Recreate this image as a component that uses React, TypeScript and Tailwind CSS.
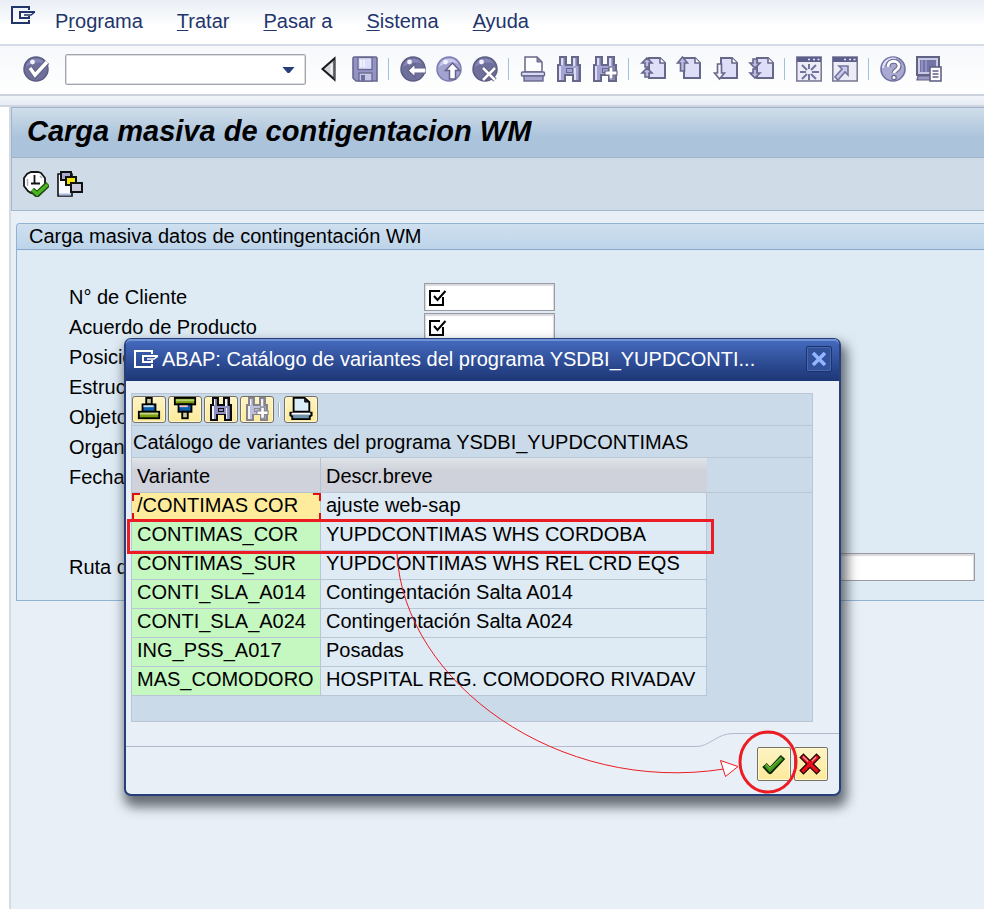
import type { ReactNode } from "react";

const FONT = "font-['Liberation_Sans',Arial,sans-serif]";

/* ---------- shared icon frame ---------- */

function Icon({ children, className = "h-[26px] w-[26px]" }: { children: ReactNode; className?: string }) {
  return (
    <svg viewBox="0 0 26 26" className={className} aria-hidden="true">
      {children}
    </svg>
  );
}

function SessionGlyph({ color }: { color: string }) {
  return (
    <svg viewBox="0 0 24 18" className="h-[18px] w-6 shrink-0" fill="none" stroke={color} strokeWidth="2" aria-hidden="true">
      <path d="M18 4V1H1v16h17v-3" />
      <path d="M24 6H9v6h9v-2" />
      <path d="M13 9h7l4-3" strokeWidth="1.4" />
    </svg>
  );
}

/* ---------- system toolbar icons ---------- */

const DARK = "#67678a";
const MID = "#8585b4";
const LIGHT = "#dedef8";

function Ball({ light = false }: { light?: boolean }) {
  return (
    <>
      <circle cx="13" cy="13" r="12" fill={light ? "#a3a3cf" : "#6f6f9c"} stroke={light ? "#7d7db2" : "#5d5d84"} strokeWidth="1.5" />
      <path d="M3 11a10 9 0 0 1 19-3C16 5 8 7 3 11z" fill={light ? "#c9c9ee" : "#8686b8"} />
      <circle cx="9.5" cy="6" r="2.4" fill="#f2f2ff" />
    </>
  );
}

const EnterIcon = () => (
  <Icon>
    <Ball />
    <path d="M7 12l5 7L24 6" fill="none" stroke="#66668a" strokeWidth="6" />
    <path d="M7 12l5 7L24 6" fill="none" stroke="#fff" strokeWidth="3.4" />
  </Icon>
);

const CollapseIcon = () => (
  <Icon>
    <path d="M18.500 2.500v21L6.500 13z" fill="#d4d4da" stroke="#16181c" strokeWidth="2" />
    <path d="M18.500 4v19" stroke="#55575c" strokeWidth="1.500" />
    <path d="M15.500 8v10" stroke="#f2f2f5" strokeWidth="2" />
  </Icon>
);

const SaveIcon = () => (
  <Icon>
    <path d="M2 1h22l1 1v23H4l-3-3V2z" fill="#9393c6" stroke="#686891" strokeWidth="1.6" />
    <rect x="6" y="1.5" width="14" height="12" fill="#dcdcfb" stroke={DARK} strokeWidth="1.3" />
    <path d="M9 4v7M12 4v7" stroke="#fff" strokeWidth="1.2" />
    <rect x="7" y="17" width="13" height="8" fill="#c6c6ea" stroke={DARK} strokeWidth="1.3" />
    <rect x="9" y="19" width="4" height="6" fill="#6f6f9c" />
  </Icon>
);

const BackIcon = () => (
  <Icon>
    <Ball />
    <path d="M8 14.500l7-6.500v4h11v5H15v4z" fill="#fff" stroke="#62628a" strokeWidth="1.2" />
  </Icon>
);

const ExitIcon = () => (
  <Icon>
    <Ball light />
    <path d="M16.500 7l7 7.500h-4V23h-6v-8.500h-4z" fill="#fff" stroke="#62628a" strokeWidth="1.5" />
  </Icon>
);

const CancelIcon = () => (
  <Icon>
    <Ball />
    <path d="M11 12l12 12M23 12L11 24" stroke="#55557a" strokeWidth="4.500" />
    <path d="M11 12l12 12M23 12L11 24" stroke="#fff" strokeWidth="2.600" />
  </Icon>
);

const PrintIcon = () => (
  <Icon>
    <path d="M5 16V1h12l5 5v10z" fill="#fdfdff" stroke={DARK} strokeWidth="1.5" />
    <path d="M17 1v5h5z" fill="#8585b4" stroke={DARK} />
    <rect x="1.500" y="16" width="23" height="4" rx="1" fill="#dadaf4" stroke={DARK} strokeWidth="1.4" />
    <rect x="4" y="20" width="19" height="5" fill="#a5a5d0" stroke={DARK} strokeWidth="1.4" />
  </Icon>
);

function Binoculars({ line, body, shine, shade }: { line: string; body: string; shine: string; shade: string }) {
  return (
    <g shapeRendering="crispEdges">
      <path d="M4 1h6v8h6V1h6v8h2v16h-7v-6H9v6H2V9h2z" fill={body} />
      <path d="M5 1h2v8H5v15H3V10h2zM17 1h2v9h-2zM18 12h2v12h-2z" fill={shine} />
      <path d="M20 1h2v8h2v15h-2V10h-2zM8 2h2v7H8z" fill={shade} />
      <path d="M4 1h6v8h6V1h6v8h2v16h-7v-6H9v6H2V9h2z" fill="none" stroke={line} strokeWidth="2" />
      <path d="M10 12h6v4h-6z" fill={body} stroke={line} strokeWidth="1" />
    </g>
  );
}

const Plus = ({ line = DARK }: { line?: string }) => (
  <path d="M17 11h4v4h4v4h-4v4h-4v-4h-4v-4h4z" fill="#fff" stroke={line} strokeWidth="1.200" />
);

const FindIcon = () => (
  <Icon>
    <Binoculars line={DARK} body="#a4a4d4" shine="#dcdcf6" shade={MID} />
  </Icon>
);

const FindNextIcon = () => (
  <Icon>
    <Binoculars line={DARK} body="#a4a4d4" shine="#dcdcf6" shade={MID} />
    <Plus />
  </Icon>
);

function Sheet({ x = 8 }: { x?: number }) {
  return (
    <g transform={`translate(${x} 0)`}>
      <path d="M1 2h11l5 5v15H1z" fill={LIGHT} stroke={DARK} strokeWidth="2" />
      <path d="M12 2v5h5" fill="#fff" stroke={DARK} strokeWidth="1.600" />
    </g>
  );
}

const UP = "M0 -5l5 5h-3v4h-4v-4h-3z";
const DOWN = "M0 5l5 -5h-3v-4h-4v4h-3z";

const FirstPageIcon = () => (
  <Icon>
    <Sheet />
    <g fill="#babae2" stroke={DARK} strokeWidth="1.600">
      <path transform="translate(7 7)" d={UP} />
      <path transform="translate(7 17)" d={UP} />
    </g>
  </Icon>
);

const PrevPageIcon = () => (
  <Icon>
    <Sheet x={7} />
    <path d="M6.500 1l5 6h-3v8h-4V7h-3z" fill="#babae2" stroke={DARK} strokeWidth="1.600" />
  </Icon>
);

const NextPageIcon = () => (
  <Icon>
    <Sheet x={8} />
    <path d="M7.500 23l5-6h-3V8h-4v9h-3z" fill="#f4f4ff" stroke={DARK} strokeWidth="1.600" />
  </Icon>
);

const LastPageIcon = () => (
  <Icon>
    <Sheet />
    <g fill="#babae2" stroke={DARK} strokeWidth="1.600">
      <path transform="translate(7 7)" d={DOWN} />
      <path transform="translate(7 17)" d={DOWN} />
    </g>
  </Icon>
);

function WindowFrame() {
  return (
    <>
      <rect x="0.800" y="1" width="24.400" height="24" fill="#ececf6" stroke="#747492" strokeWidth="1.500" />
      <rect x="1" y="1" width="24" height="5" fill="#5e5e8c" />
      <path d="M12 3.500h2M17 3.500h2M21.500 3.500h2" stroke="#e6e6ff" strokeWidth="1.500" />
    </>
  );
}

const NewSessionIcon = () => (
  <Icon>
    <WindowFrame />
    <path d="M13 8v5M13 18v6M4 16h6M16 16h7M6 9l5 5M20 9l-5 5M6 23l5-5M20 23l-5-5" stroke="#7474a0" strokeWidth="2" />
  </Icon>
);

const ShortcutIcon = () => (
  <Icon>
    <WindowFrame />
    <path d="M7 10h9v9l-3-3-7 8-3-3 7-8z" fill="#c9c9ec" stroke="#74749c" strokeWidth="1.600" />
  </Icon>
);

const HelpIcon = () => (
  <Icon>
    <circle cx="13" cy="13" r="12" fill="#a9a9d2" stroke="#7272a2" strokeWidth="1.600" />
    <path d="M3 12a10 10 0 0 1 13-9" fill="none" stroke="#e2e2fa" strokeWidth="2" />
    <path d="M8 11c0-8 11-7 11-1 0 4-5 4-5 7" fill="none" stroke="#67678e" strokeWidth="5" />
    <path d="M8 11c0-8 11-7 11-1 0 4-5 4-5 7" fill="none" stroke="#fff" strokeWidth="2.800" />
    <circle cx="14" cy="21.500" r="2.200" fill="#fff" stroke="#67678e" strokeWidth="1.200" />
  </Icon>
);

const LayoutIcon = () => (
  <Icon>
    <rect x="1" y="1" width="22" height="18" fill="#c9c9e4" stroke="#626286" strokeWidth="2" />
    <rect x="4" y="4" width="16" height="12" fill="#7474a6" />
    <path d="M6 4v12M10 4v12" stroke="#9090c2" strokeWidth="2" />
    <path d="M2 20h13v4H1z" fill="#9a9ac4" stroke="#626286" strokeWidth="1.200" />
    <rect x="14" y="11" width="11" height="14" fill="#fff" stroke="#626286" strokeWidth="1.600" />
    <path d="M16.500 15h6M16.500 18h6M16.500 21h6" stroke="#626286" strokeWidth="1.300" />
  </Icon>
);

/* ---------- application toolbar icons ---------- */

const ExecuteIcon = () => (
  <Icon>
    <path d="M8 1h7l3 1 4 5v8l-4 5-4 2H8l-3-2-4-5V7l3-4z" fill="#fff" stroke="#141414" strokeWidth="1.800" />
    <path d="M11.500 4v8M8 12.500h9" stroke="#141414" strokeWidth="1.800" />
    <path d="M4.500 8v7M17 5l2 2" stroke="#aaaac4" strokeWidth="1.500" />
    <path d="M9 19l5 4.500L25 13" fill="none" stroke="#1c4b10" strokeWidth="6" />
    <path d="M9.500 19l4.500 4L24.500 13.500" fill="none" stroke="#4db521" strokeWidth="3.400" />
  </Icon>
);

const VariantIcon = () => (
  <Icon>
    <path d="M1 3h14v22H1z" fill="#f8faff" stroke="#111" strokeWidth="1.600" />
    <path d="M2 23.500h12" stroke="#a9bce6" strokeWidth="2" />
    <rect x="4" y="1" width="10" height="8" fill="#a8a8d0" stroke="#111" strokeWidth="2" />
    <rect x="9" y="6" width="10" height="8" fill="#f4e50c" stroke="#111" strokeWidth="2" />
    <rect x="14" y="12" width="11" height="9" fill="#c8c8dc" stroke="#111" strokeWidth="2" />
  </Icon>
);

/* ---------- dialog toolbar icons ---------- */

const SortAscIcon = () => (
  <Icon className="h-6 w-6">
    <g stroke="#000" strokeWidth="2">
      <rect x="10" y="1" width="6" height="7" fill="#c9c9a0" />
      <rect x="6" y="8" width="14" height="8" fill="#0a5fae" />
      <rect x="2" y="16" width="22" height="7" fill="#7f9d10" />
    </g>
    <path d="M7 10h11" stroke="#cfe0ee" strokeWidth="2" />
    <path d="M3 18h20" stroke="#c2d68a" strokeWidth="2" />
  </Icon>
);

const SortDescIcon = () => (
  <Icon className="h-6 w-6">
    <g stroke="#000" strokeWidth="2">
      <rect x="2" y="1" width="22" height="7" fill="#7f9d10" />
      <rect x="6" y="8" width="14" height="8" fill="#0a5fae" />
      <rect x="10" y="16" width="6" height="7" fill="#c9c9a0" />
    </g>
    <path d="M3 3.500h20" stroke="#b5d070" strokeWidth="2" />
    <path d="M7 10h9" stroke="#f2c4c0" strokeWidth="2" />
  </Icon>
);

const DialogFindIcon = () => (
  <Icon className="h-6 w-6">
    <Binoculars line="#0b0b10" body="#8f8fc2" shine="#f2f2f2" shade="#77778c" />
  </Icon>
);

const DialogFindNextIcon = () => (
  <Icon className="h-6 w-6">
    <Binoculars line="#84848c" body="#c0c0dc" shine="#f2f2f4" shade="#a4a4b0" />
    <Plus line="#84848c" />
  </Icon>
);

const DialogPrintIcon = () => (
  <Icon className="h-6 w-6">
    <path d="M5 16V1h12l5 4.500V16z" fill="#dcedfa" stroke="#000" strokeWidth="2" />
    <path d="M17 1v4.500h5z" fill="#223" stroke="#000" />
    <path d="M1.500 17h23v3l-2 1v3h-19v-3l-2-1z" fill="#6e93a8" stroke="#000" strokeWidth="2" />
    <path d="M3 18h20" stroke="#fff" strokeWidth="2" />
  </Icon>
);

const ConfirmIcon = () => (
  <Icon>
    <path d="M3.500 14l5.500 6L22 6" fill="none" stroke="#0d2408" strokeWidth="6" strokeLinejoin="round" />
    <path d="M4.500 14l4.500 5L21 7" fill="none" stroke="#3f9a1c" strokeWidth="3.400" />
    <path d="M5 13l4 4.500L20 6.500" fill="none" stroke="#7cc24e" strokeWidth="1" />
  </Icon>
);

const RejectIcon = () => (
  <Icon>
    <path d="M5.500 6.500l13 13M18.500 6.500l-13 13" stroke="#1c0203" strokeWidth="6" strokeLinecap="square" />
    <path d="M5.500 6.500l13 13M18.500 6.500l-13 13" stroke="#e8101a" strokeWidth="3.600" strokeLinecap="square" />
    <path d="M5 5.500l5 5M18 6l-4 4" stroke="#ffa0a6" strokeWidth="1.300" />
  </Icon>
);

const RequiredGlyph = () => (
  <svg viewBox="0 0 18 17" className="h-[17px] w-[18px] shrink-0" fill="none" stroke="#000" strokeWidth="2" aria-hidden="true">
    <path d="M11 2H1v14h13V8" />
    <path d="M5 7l3.500 4L16.500 2" />
  </svg>
);

/* ---------- data ---------- */

const menus = [
  ["P", "r", "ograma"],
  ["", "T", "ratar"],
  ["", "P", "asar a"],
  ["", "S", "istema"],
  ["", "A", "yuda"],
];

const systemGroups: { name: string; icon: ReactNode }[][] = [
  [
    { name: "Contraer", icon: <CollapseIcon /> },
    { name: "Grabar", icon: <SaveIcon /> },
  ],
  [
    { name: "Back", icon: <BackIcon /> },
    { name: "Finalizar", icon: <ExitIcon /> },
    { name: "Cancelar", icon: <CancelIcon /> },
  ],
  [
    { name: "Imprimir", icon: <PrintIcon /> },
    { name: "Buscar", icon: <FindIcon /> },
    { name: "Continuar búsqueda", icon: <FindNextIcon /> },
  ],
  [
    { name: "Primera página", icon: <FirstPageIcon /> },
    { name: "Página anterior", icon: <PrevPageIcon /> },
    { name: "Página siguiente", icon: <NextPageIcon /> },
    { name: "Última página", icon: <LastPageIcon /> },
  ],
  [
    { name: "Crear modo", icon: <NewSessionIcon /> },
    { name: "Crear acceso directo", icon: <ShortcutIcon /> },
  ],
  [
    { name: "Ayuda", icon: <HelpIcon /> },
    { name: "Ajustar layout", icon: <LayoutIcon /> },
  ],
];

const fields = [
  { id: "cliente", label: "N° de Cliente" },
  { id: "acuerdo", label: "Acuerdo de Producto" },
  { id: "posicion", label: "Posición" },
  { id: "estructura", label: "Estruct." },
  { id: "objeto", label: "Objeto" },
  { id: "organizacion", label: "Organ." },
  { id: "fecha", label: "Fecha" },
];

const variants = [
  ["/CONTIMAS COR", "ajuste web-sap"],
  ["CONTIMAS_COR", "YUPDCONTIMAS WHS CORDOBA"],
  ["CONTIMAS_SUR", "YUPDCONTIMAS WHS REL CRD EQS"],
  ["CONTI_SLA_A014", "Contingentación Salta A014"],
  ["CONTI_SLA_A024", "Contingentación Salta A024"],
  ["ING_PSS_A017", "Posadas"],
  ["MAS_COMODORO", "HOSPITAL REG. COMODORO RIVADAV"],
];

/* ---------- page parts ---------- */

function MenuBar() {
  return (
    <nav className="flex h-[46px] items-start border-b-2 border-[#d5dbe6] bg-linear-to-b from-[#e9eef5] to-white to-60% pl-[11px] text-[#22356b]">
      <span className="mt-[6px] mr-5">
        <SessionGlyph color="#22356b" />
      </span>
      <div className="flex gap-[34px]">
        {menus.map(([before, key, after]) => (
          <button key={key + after} type="button" className="h-[42px] whitespace-nowrap">
            {before}
            <span className="underline decoration-1 underline-offset-2">{key}</span>
            {after}
          </button>
        ))}
      </div>
    </nav>
  );
}

function SystemToolbar() {
  return (
    <div className="flex h-[50px] items-center border-b-2 border-[#ccd3df] bg-linear-to-b from-[#f6f8fb] to-white pb-[2px] pl-[23px]">
      <button type="button" aria-label="Entrar" className="shrink-0">
        <EnterIcon />
      </button>
      <div className="relative ml-4 w-[241px] shrink-0">
        <select
          aria-label="Comando"
          className="block h-[31px] w-full appearance-none rounded-[2px] border border-[#a3a5ad] bg-white shadow-[inset_0_0_0_1px_#dcdde2]"
        >
          <option value=""></option>
        </select>
        <svg viewBox="0 0 14 8" className="pointer-events-none absolute top-3 right-[11px] h-[7px] w-[13px]" aria-hidden="true">
          <path d="M0 1h14L8 8H6z" fill="#27407c" />
        </svg>
      </div>
      {systemGroups.map((group, index) => (
        <div key={group[0].name} className="flex shrink-0 items-center">
          {index > 0 && <span className="mr-px ml-[10px] h-[22px] w-px bg-[#9fc2dc]" />}
          {group.map(({ name, icon }) => (
            <button key={name} type="button" aria-label={name} className="ml-[10px]">
              {icon}
            </button>
          ))}
        </div>
      ))}
    </div>
  );
}

const fieldBox = "flex h-7 items-center border border-[#9a9ca2] bg-white shadow-[inset_0_1px_1px_1px_#dadade]";

function SelectionForm() {
  return (
    <form className="ml-[5px] rounded-tl-[4px] border border-r-0 border-[#92b2d3] bg-[#deebf4]">
      <h2 className="h-[26px] rounded-tl-[3px] border-b border-[#86a6cf] bg-linear-to-b from-[#cfe0ef] to-[#bdd4e9] pl-3 leading-6">
        Carga masiva datos de contingentación WM
      </h2>
      <div className="pt-8 pr-[9px] pb-[18px] pl-[52px]">
        {fields.map(({ id, label }) => (
          <div key={id} className="flex h-[30px] items-center">
            <label htmlFor={id} className="w-[355px] shrink-0">
              {label}
            </label>
            <div className={`${fieldBox} w-[131px] pl-1`}>
              <RequiredGlyph />
              <input id={id} type="text" className="min-w-0 flex-1 bg-transparent outline-none" />
            </div>
          </div>
        ))}
        <div className="mt-[60px] flex h-[30px] items-center">
          <label htmlFor="ruta" className="w-[355px] shrink-0">
            Ruta de
          </label>
          <div className={`${fieldBox} flex-1`}>
            <input id="ruta" type="text" className="min-w-0 flex-1 bg-transparent outline-none" />
          </div>
        </div>
      </div>
    </form>
  );
}

const toolButton =
  "flex h-[27px] w-[34px] items-center justify-center rounded-[3px] border border-[#77725f] bg-linear-to-b from-[#fdf3c4] to-[#fdea98] pb-px shadow-[inset_0_0_0_1px_#fff6d6]";

const footerButton =
  "flex h-[34px] w-[34px] items-center justify-center rounded-[2px] border border-[#77725f] bg-linear-to-b from-[#fdf3c4] to-[#fdea98] shadow-[inset_0_0_0_1px_#fff6d6]";

function VariantTable() {
  return (
    <table className="w-full table-fixed border-separate border-spacing-0 text-left">
      <colgroup>
        <col className="w-[189px]" />
        <col className="w-[386px]" />
        <col />
      </colgroup>
      <thead>
        <tr className="h-[35px]">
          <th className="border-r border-b border-[#b4c2d1] bg-linear-to-b from-[#e0e5e9] to-[#cfd2da] to-35% p-0 pt-[2px] pl-[5px] font-normal">
            Variante
          </th>
          <th className="border-b border-[#b9c6d6] bg-linear-to-b from-[#e0e5e9] to-[#cfd2da] to-35% p-0 pt-[2px] pl-[5px] font-normal">
            Descr.breve
          </th>
          <td className="border-b border-[#b9c6d6]" />
        </tr>
      </thead>
      <tbody>
        {variants.map(([name, description], index) => (
          <tr key={name} className="h-[29px]">
            <td
              className={`relative border-r border-b border-[#b9c6d6] p-0 pb-[3px] pl-[5px] leading-[25px] whitespace-nowrap ${
                index === 0 ? "bg-[#ffeb9c]" : "bg-[#c5f7c0]"
              }`}
            >
              {name}
              {index === 0 && (
                <>
                  <span className="absolute top-0 left-0 size-2 border-t-2 border-l-2 border-[#e01010]" />
                  <span className="absolute top-0 -right-px size-2 border-t-2 border-r-2 border-[#e01010]" />
                  <span className="absolute bottom-0 left-0 size-2 border-l-2 border-[#e01010]" />
                  <span className="absolute -right-px bottom-0 size-2 border-r-2 border-[#e01010]" />
                </>
              )}
            </td>
            <td className="border-r border-b border-[#b9c6d6] bg-[#deebf5] p-0 pb-[3px] pl-[5px] leading-[25px] whitespace-nowrap">
              {description}
            </td>
            <td />
          </tr>
        ))}
      </tbody>
    </table>
  );
}

function VariantDialog() {
  return (
    <section
      role="dialog"
      aria-labelledby="dialog-title"
      className="absolute top-[338px] left-[124px] w-[717px] rounded-[7px] border-2 border-t border-[#27407c] bg-[#e8eff6] shadow-[3px_8px_12px_3px_rgba(60,66,74,0.75)]"
    >
      <header className="flex h-[42px] items-center rounded-t-[5px] border-t-2 border-[#6f93d4] bg-linear-to-b from-[#4469bd] to-[#1d3675] pr-[7px] pb-1 pl-2 text-white">
        <SessionGlyph color="#ffffff" />
        <h2 id="dialog-title" className="ml-1 flex-1 truncate pb-px">
          ABAP: Catálogo de variantes del programa YSDBI_YUPDCONTI...
        </h2>
        <button
          type="button"
          aria-label="Cerrar"
          className="flex size-[26px] items-center justify-center rounded-[2px] border border-[#1c3269] bg-[#31519b] shadow-[inset_0_0_0_1px_#4668b4]"
        >
          <svg viewBox="0 0 14 14" className="size-[14px]" stroke="#93b4ff" strokeWidth="3.600" aria-hidden="true">
            <path d="M1 1l12 12M13 1L1 13" />
          </svg>
        </button>
      </header>

      <div className="mt-3 mr-[26px] ml-[5px] border border-[#b9c6d6] bg-[#cbdae8] pb-[25px]">
        <div className="flex h-8 items-center gap-[2px] border-b border-[#b9c6d6]">
          <button type="button" aria-label="Orden ascendente" className={toolButton}>
            <SortAscIcon />
          </button>
          <button type="button" aria-label="Orden descendente" className={toolButton}>
            <SortDescIcon />
          </button>
          <button type="button" aria-label="Buscar variante" className={toolButton}>
            <DialogFindIcon />
          </button>
          <button type="button" aria-label="Buscar siguiente" disabled className={toolButton}>
            <DialogFindNextIcon />
          </button>
          <span className="mx-[2px] h-[14px] w-[2px] border-l border-[#9eacba] bg-white" />
          <button type="button" aria-label="Imprimir lista" className={toolButton}>
            <DialogPrintIcon />
          </button>
        </div>
        <p className="h-8 border-b border-[#b9c6d6] pl-px leading-8">
          Catálogo de variantes del programa YSDBI_YUPDCONTIMAS
        </p>
        <VariantTable />
      </div>

      <footer className="pb-[13px]">
        <div className="mt-[11px] flex h-[14px]">
          <div className="flex-1 border-b border-[#b0bccd]" />
          <svg viewBox="0 0 36 14" className="h-[14px] w-9" fill="none" stroke="#b0bccd" aria-hidden="true">
            <path d="M0 13.500C12 13.500 20 0.500 36 0.500" />
          </svg>
          <div className="w-[106px] border-t border-[#b0bccd]" />
        </div>
        <div className="flex justify-end gap-[3px] pr-[11px]">
          <button type="button" aria-label="Aceptar" className={footerButton}>
            <ConfirmIcon />
          </button>
          <button type="button" aria-label="Cancelar selección" className={footerButton}>
            <RejectIcon />
          </button>
        </div>
      </footer>

      {/* Red guide: chosen row, arrow and confirm button */}
      <svg
        viewBox="0 0 717 459"
        className="pointer-events-none absolute -top-px -left-[2px] h-[459px] w-[717px]"
        fill="none"
        stroke="#ec1c24"
        aria-hidden="true"
      >
        <rect x="4.500" y="182.500" width="584" height="32" strokeWidth="3" />
        <path d="M273 216C280 345 435 457 600 431" />
        <path d="M596.500 422.500l17.500 6-12.500 10z" fill="#fff" />
        <ellipse cx="644" cy="424" rx="28" ry="30" strokeWidth="3" />
      </svg>
    </section>
  );
}

export default function App() {
  return (
    <div className={`relative flex min-h-screen flex-col overflow-hidden bg-white text-xl leading-7 text-black ${FONT}`}>
      <MenuBar />
      <SystemToolbar />
      <div className="h-[11px] border-b-2 border-[#cfd6e0] bg-linear-to-b from-[#f1f5fa] to-[#e6ecf4]" />
      <main className="ml-[9px] flex-1 border-l-2 border-[#d6dae4] bg-[#e8eff6]">
        <h1 className="h-[51px] border-t border-b border-l border-[#9db4cc] bg-linear-to-b from-[#d0deea] to-[#abc3db] to-60% pl-[15px] text-[29px] leading-[46px] font-bold italic">
          Carga masiva de contigentacion WM
        </h1>
        <div className="mb-3 flex h-[53px] items-center gap-2 border-b border-l border-[#a3b7c9] bg-[#cfdce7] pl-[11px]">
          <button type="button" aria-label="Ejecutar">
            <ExecuteIcon />
          </button>
          <button type="button" aria-label="Traer variante">
            <VariantIcon />
          </button>
        </div>
        <SelectionForm />
      </main>
      <VariantDialog />
    </div>
  );
}
